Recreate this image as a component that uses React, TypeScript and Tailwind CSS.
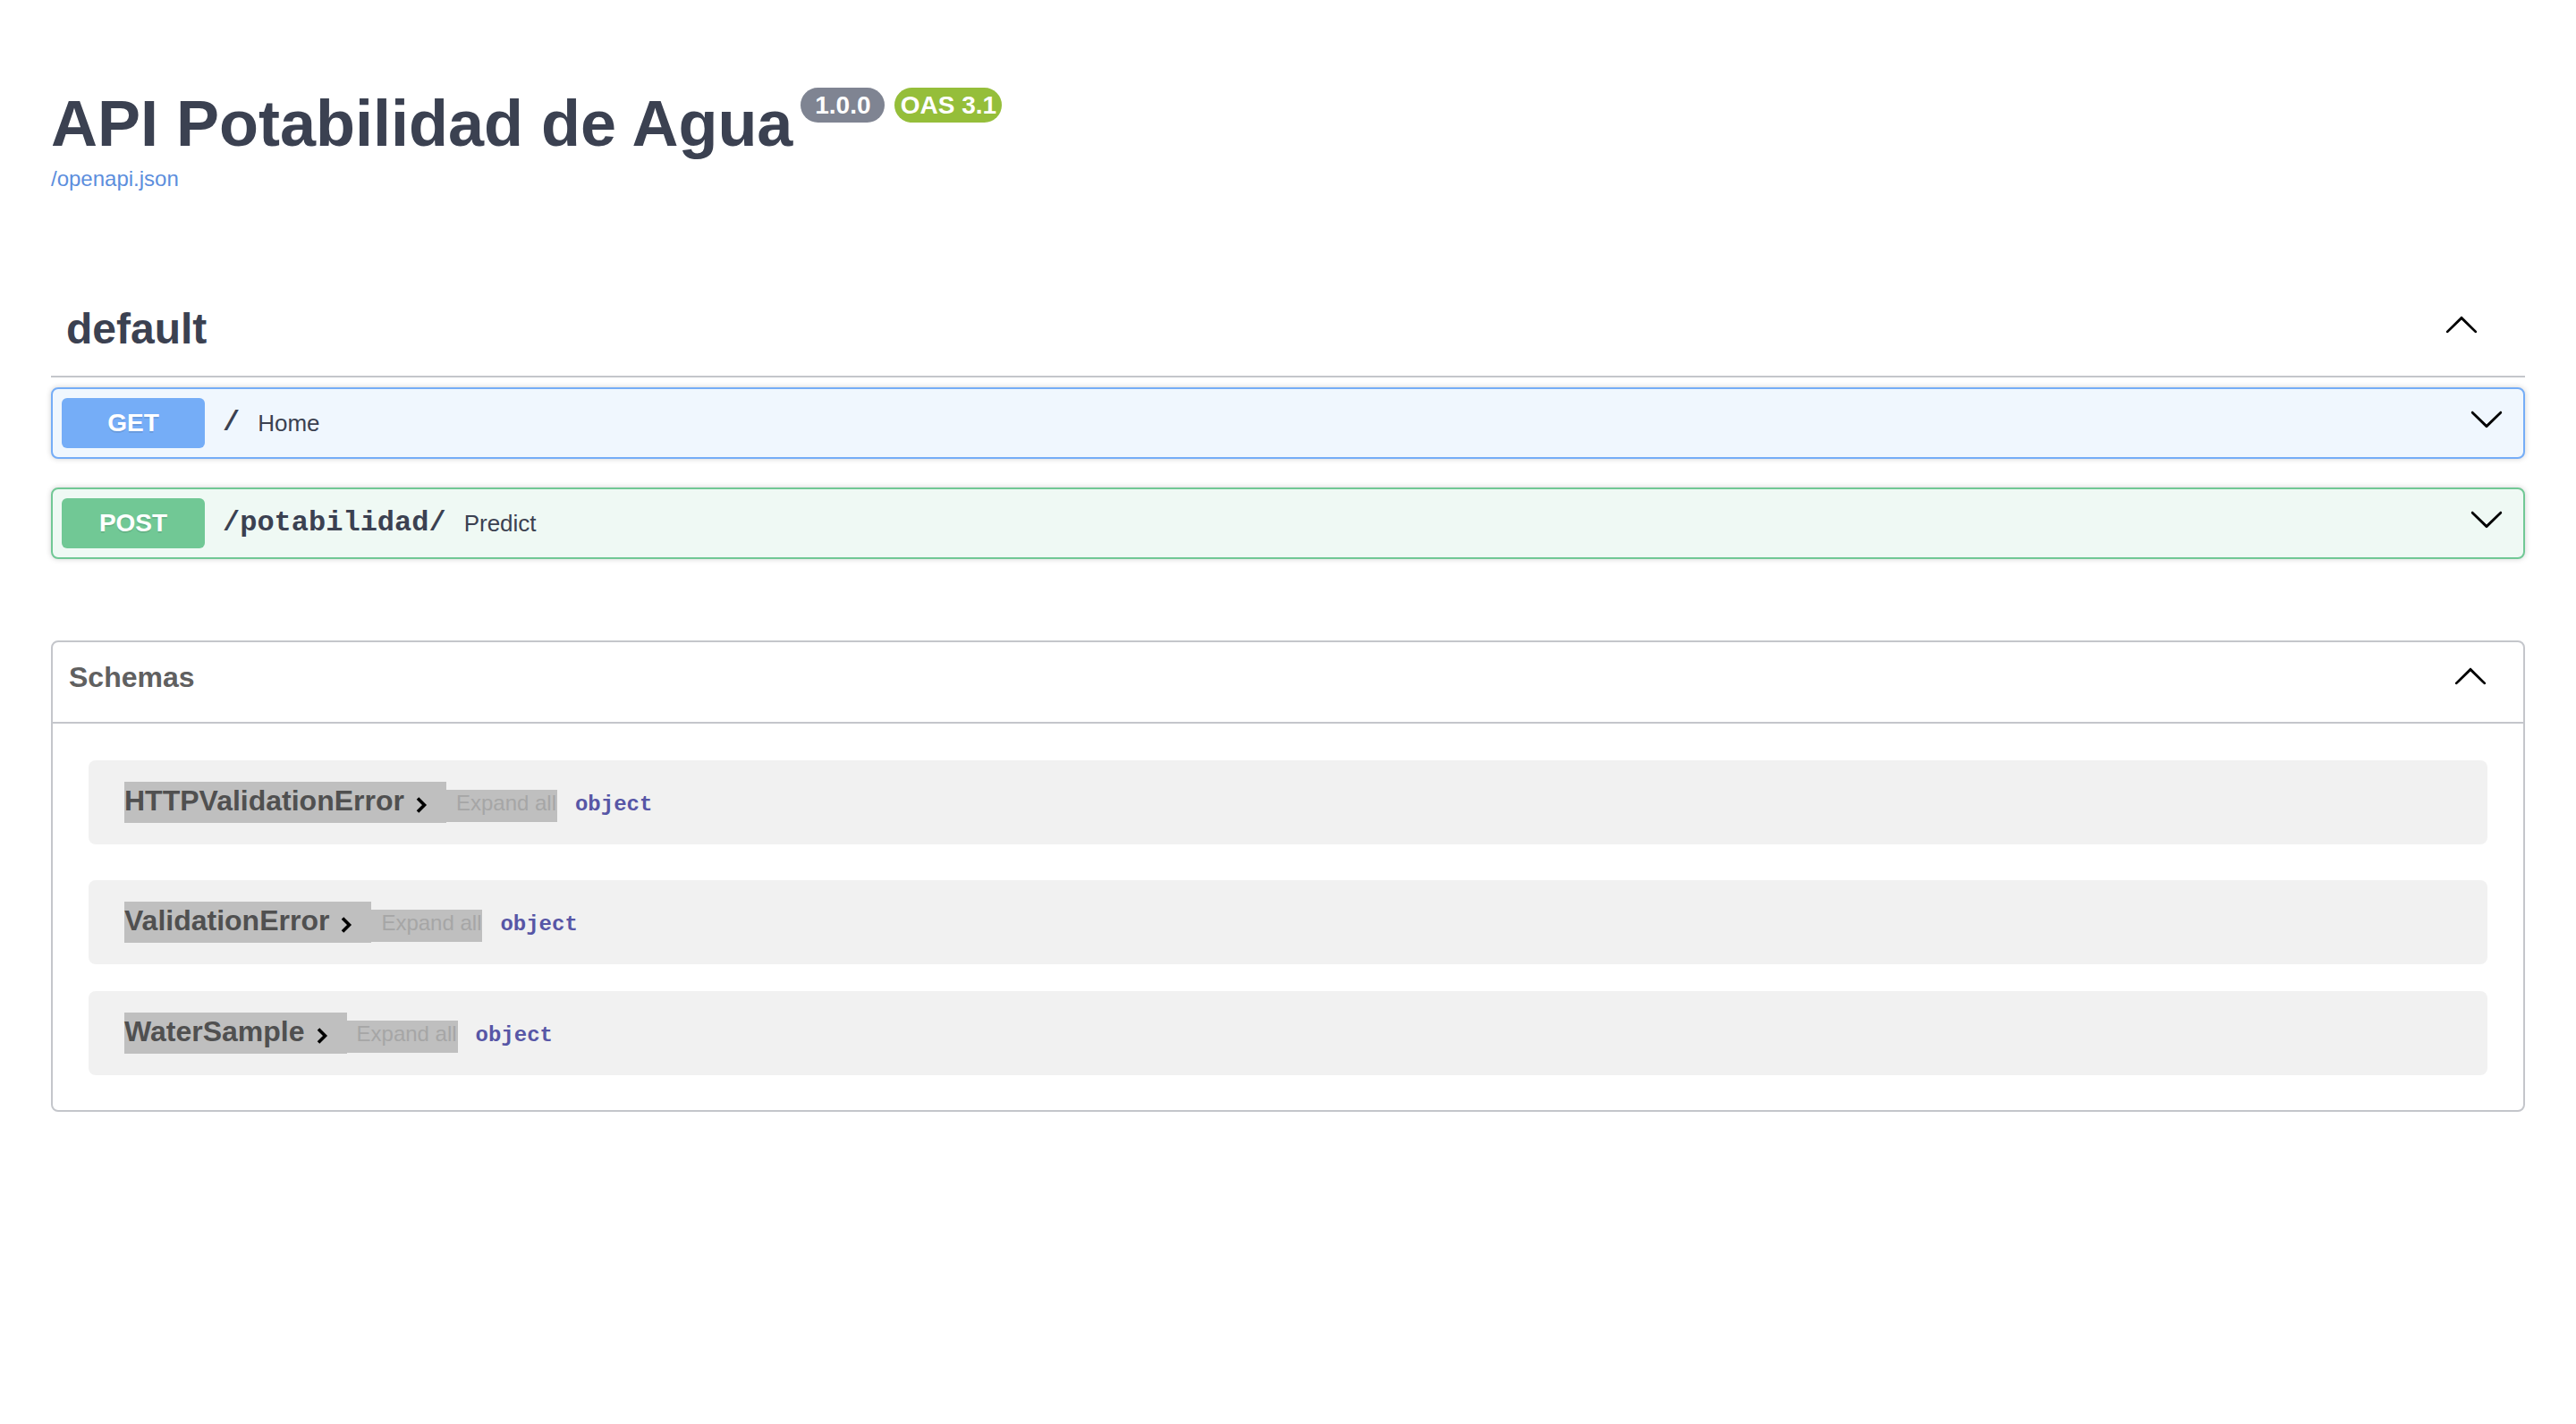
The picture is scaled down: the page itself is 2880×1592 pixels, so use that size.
import React from "react";

const DOWN =
  "M17.418 6.109c.272-.268.709-.268.979 0s.271.701 0 .969l-7.908 7.83c-.27.268-.707.268-.979 0l-7.908-7.83c-.27-.268-.27-.701 0-.969.271-.268.709-.268.979 0L10 13.25l7.418-7.141z";
const UP =
  "M 17.418 14.908 C 17.69 15.176 18.127 15.176 18.397 14.908 C 18.667 14.64 18.668 14.207 18.397 13.939 L 10.489 6.109 C 10.219 5.841 9.782 5.841 9.51 6.109 L 1.602 13.939 C 1.332 14.207 1.332 14.64 1.602 14.908 C 1.873 15.176 2.311 15.176 2.581 14.908 L 10 7.767 L 17.418 14.908 Z";

function Arrow({ d, className }: { d: string; className?: string }) {
  return (
    <svg viewBox="0 0 20 20" width={40} height={40} className={className} aria-hidden="true">
      <path d={d} fill="#000" />
    </svg>
  );
}

function SmallChevron() {
  return (
    <svg viewBox="0 0 14 20" width={14} height={20} className="ml-[12px] mt-[13px] shrink-0" aria-hidden="true">
      <path d="M3 2.5 L10.5 10 L3 17.5" fill="none" stroke="#000" strokeWidth={3.6} />
    </svg>
  );
}

function Op({
  method,
  path,
  desc,
  color,
  bg,
  className,
}: {
  method: string;
  path: string;
  desc: string;
  color: string;
  bg: string;
  className?: string;
}) {
  return (
    <div
      className={`flex items-center rounded-[8px] border-2 p-[10px] shadow-[0_0_6px_rgba(0,0,0,0.19)] ${color} ${bg} ${className ?? ""}`}
    >
      <span
        className={`w-[160px] rounded-[6px] py-[12px] text-center text-[28px] font-bold leading-[32px] text-white [text-shadow:0_2px_0_rgba(0,0,0,0.1)] ${
          method === "GET" ? "bg-[#75adf7]" : "bg-[#71c895]"
        }`}
      >
        {method}
      </span>
      <span className="px-[20px] font-['Liberation_Mono',monospace] text-[32px] font-bold leading-[40px] text-[#3b4151]">
        {path}
      </span>
      <span className="flex-1 text-[26px] leading-[30px] text-[#3b4151]">{desc}</span>
      <Arrow d={DOWN} className="mb-[10px] mr-[11px] shrink-0" />
    </div>
  );
}

function ModelRow({ name, className }: { name: string; className?: string }) {
  return (
    <div className={`flex items-baseline rounded-[8px] bg-[#f1f1f1] px-[40px] py-[24px] ${className ?? ""}`}>
      <div className="flex items-start bg-[#bfbfbf] pb-[7px] pr-[21px] pt-[3px]">
        <span className="text-[32px] font-bold leading-[36px] text-[#505050]">{name}</span>
        <SmallChevron />
      </div>
      <div className="w-[124px] overflow-hidden whitespace-nowrap bg-[#bfbfbf] pb-[7px] pl-[11px] pt-[1px] text-[24px] leading-[28px] text-[#a6a6a6]">
        Expand all
      </div>
      <span className="ml-[20px] font-['Liberation_Mono',monospace] text-[24px] font-bold leading-[28px] text-[#5756a6]">
        object
      </span>
    </div>
  );
}

export default function App() {
  return (
    <div className="min-h-screen bg-white font-['Liberation_Sans',Arial,sans-serif] text-[#3b4151]">
      <div className="px-[57px] pb-[100px]">
        {/* Info */}
        <div className="pt-[98px]">
          <div className="flex items-start">
            <h2 className="mt-[4px] text-[72px] font-bold leading-[72px] text-[#3b4151]">API Potabilidad de Agua</h2>
            <span className="ml-[9px] flex h-[39px] w-[94px] items-center justify-center rounded-full bg-[#7f8492] text-[28px] font-bold leading-[39px] text-white">
              1.0.0
            </span>
            <span className="ml-[11px] flex h-[39px] w-[120px] items-center justify-center rounded-full bg-[#95be3a] text-[28px] font-bold leading-[39px] text-white">
              OAS 3.1
            </span>
          </div>
          <a className="mt-[12px] block w-fit text-[24px] leading-[28px] text-[#5c8edd]" href="#">
            /openapi.json
          </a>
        </div>

        {/* Tag */}
        <div className="mt-[98px] flex h-[110px] items-start border-b-2 border-[#c4c6cb] pl-[17px] pr-[51px]">
          <h3 className="mt-[28px] flex-1 text-[48px] font-bold leading-[56px] text-[#3b4151]">default</h3>
          <Arrow d={UP} className="mt-[30px] shrink-0" />
        </div>

        <Op method="GET" path="/" desc="Home" color="border-[#75adf7]" bg="bg-[#f0f7fe]" className="mt-[11px]" />
        <Op
          method="POST"
          path="/potabilidad/"
          desc="Predict"
          color="border-[#71c895]"
          bg="bg-[#eff9f4]"
          className="mt-[32px]"
        />

        {/* Schemas */}
        <section className="mt-[91px] rounded-[8px] border-2 border-[#c4c6cb] pb-[39px]">
          <div className="flex h-[91px] items-start border-b-2 border-[#c4c6cb] pl-[18px] pr-[39px]">
            <h4 className="mt-[21px] flex-1 text-[32px] font-bold leading-[36px] text-[#606060]">Schemas</h4>
            <Arrow d={UP} className="mt-[17px] shrink-0" />
          </div>
          <div className="mx-[40px] mt-[41px] flex flex-col">
            <ModelRow name="HTTPValidationError" className="mb-[40px]" />
            <ModelRow name="ValidationError" className="mb-[30px]" />
            <ModelRow name="WaterSample" />
          </div>
        </section>
      </div>
    </div>
  );
}
